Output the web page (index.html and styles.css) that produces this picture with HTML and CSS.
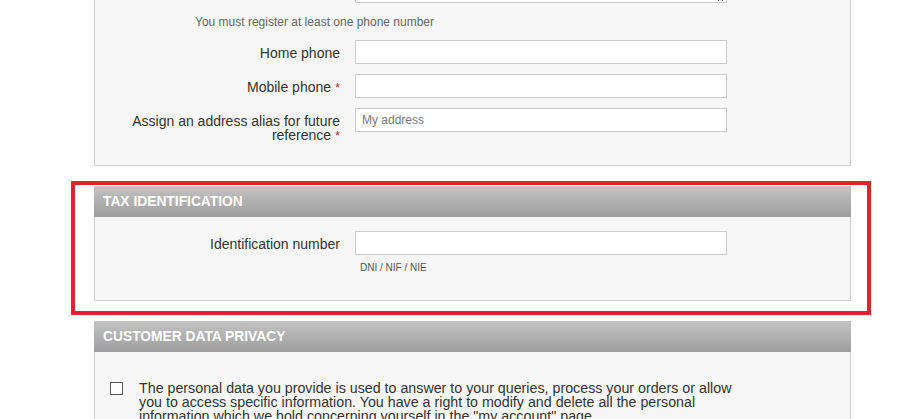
FILE: index.html
```html
<!DOCTYPE html>
<html lang="en">
<head>
<meta charset="utf-8">
<title>Address form</title>
<link rel="stylesheet" href="styles.css">
</head>
<body>
<main class="page">
  <section class="panel panel-address">
    <div class="panel-body">
      <div class="row row-textarea">
        <textarea class="field textarea" aria-label="Additional information"></textarea>
      </div>
      <p class="note">You must register at least one phone number</p>
      <div class="row">
        <label class="label">Home phone</label>
        <input class="field" type="text">
      </div>
      <div class="row">
        <label class="label">Mobile phone <span class="req">*</span></label>
        <input class="field" type="text">
      </div>
      <div class="row">
        <label class="label">Assign an address alias for future reference <span class="req">*</span></label>
        <input class="field" type="text" placeholder="My address">
      </div>
    </div>
  </section>

  <section class="panel panel-tax">
    <div class="highlight"></div>
    <h3 class="panel-head">TAX IDENTIFICATION</h3>
    <div class="panel-body">
      <div class="row">
        <label class="label">Identification number</label>
        <div class="field-wrap">
          <input class="field" type="text">
          <span class="hint">DNI / NIF / NIE</span>
        </div>
      </div>
    </div>
  </section>

  <section class="panel panel-privacy">
    <h3 class="panel-head">CUSTOMER DATA PRIVACY</h3>
    <div class="panel-body">
      <label class="check-row">
        <span class="checkbox"></span>
        <span class="check-text">The personal data you provide is used to answer to your queries, process your orders or allow<br>you to access specific information. You have a right to modify and delete all the personal<br>information which we hold concerning yourself in the "my account" page.</span>
      </label>
    </div>
  </section>
</main>
</body>
</html>
```

FILE: styles.css
```css
html, body {
  margin: 0;
  padding: 0;
  background: #ffffff;
  overflow: hidden;
}

body {
  font-family: "Liberation Sans", Arial, sans-serif;
  color: #333333;
}

.page {
  width: 757px;
  margin: -53px 0 0 94px;
  display: flex;
  flex-direction: column;
  gap: 20px;
}

.panel {
  position: relative;
  background: #f7f7f7;
}

.panel-body {
  border: 1px solid #d0d0d0;
  background: #f7f7f7;
}

.panel-head {
  margin: 0;
  height: 31px;
  line-height: 31px;
  padding-left: 9px;
  font-size: 13.8px;
  font-weight: bold;
  color: #ffffff;
  background: linear-gradient(to bottom, #c3c3c3 0%, #9e9e9e 100%);
}

.panel-head + .panel-body {
  border-top: none;
}

.panel-address .panel-body {
  padding: 15px 0 22px;
}

.row {
  display: flex;
  align-items: flex-start;
  margin-bottom: 10px;
}

.row:last-child {
  margin-bottom: 0;
}

.row-textarea {
  padding-left: 260px;
  margin-bottom: 0;
}

.label {
  width: 245px;
  flex: none;
  padding: 6px 0 0;
  margin-right: 15px;
  text-align: right;
  font-size: 14px;
  line-height: 14px;
  color: #333333;
}

.req {
  font-size: 13px;
  color: #c0262e;
}

.field {
  box-sizing: border-box;
  width: 372px;
  height: 24px;
  margin: 0;
  padding: 0 6px;
  border: 1px solid #cccccc;
  background: #ffffff;
  font-family: "Liberation Sans", Arial, sans-serif;
  font-size: 12px;
  color: #333333;
  outline: none;
}

.field::placeholder {
  color: #777777;
}

.textarea {
  height: 40px;
  resize: vertical;
}

.note {
  margin: 12px 0 11px 100px;
  font-size: 12px;
  line-height: 14px;
  color: #666666;
}

.panel-tax .panel-body {
  padding: 14px 0 26px;
}

.field-wrap {
  display: flex;
  flex-direction: column;
}

.hint {
  margin: 7px 0 0 5px;
  font-size: 10px;
  line-height: 12px;
  color: #555555;
}

.highlight {
  position: absolute;
  left: -23px;
  top: -5px;
  right: -20px;
  bottom: -14px;
  border: 4px solid #e3202b;
  pointer-events: none;
}

.panel-privacy .panel-body {
  padding: 29px 0 40px;
}

.check-row {
  display: flex;
  align-items: flex-start;
  padding-left: 15px;
}

.checkbox {
  flex: none;
  box-sizing: border-box;
  width: 13px;
  height: 13px;
  margin-top: 1px;
  margin-right: 16px;
  border: 1px solid #555555;
  background: #ffffff;
}

.check-text {
  font-size: 14.25px;
  line-height: 14px;
  color: #333333;
  white-space: nowrap;
}
```
